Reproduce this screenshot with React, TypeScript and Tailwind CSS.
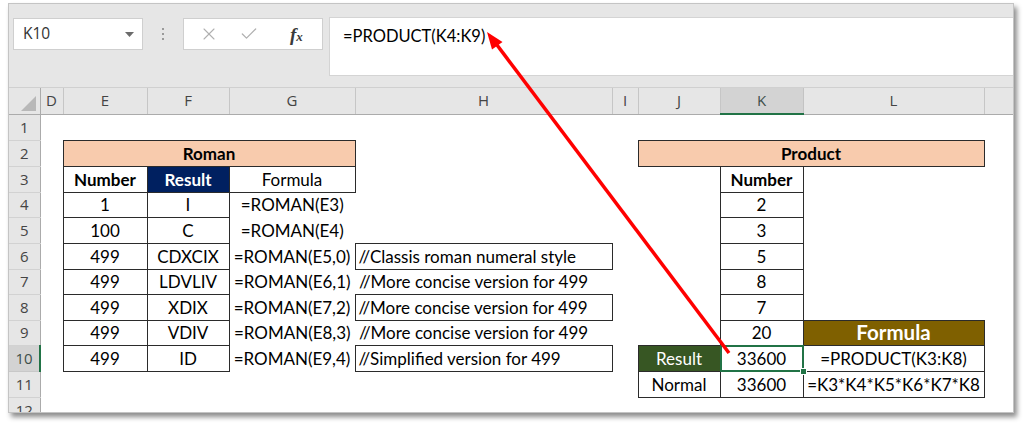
import { X, Check } from "lucide-react";

type Cell = { t?: string; cls?: string; span?: number; sel?: boolean };

const colWidths = [31, 23, 84, 82, 126, 257, 26, 82, 83, 181, 29];
const colLetters = ["D", "E", "F", "G", "H", "I", "J", "K", "L", ""];
const rowHeights = [26, 26, 26, 25, 26, 26, 25, 26, 25, 26, 26, 26];

const B = "border border-[#2b2b2b]";
const peach = `${B} bg-[#f8cbad] font-bold`;
const box = `${B} text-left pl-[3px]`;
const formulaHead = `${B} bg-[#7f6000] text-white font-bold text-[20.5px]`;

const romanRows: [string, string, string, string, boolean][] = [
  ["1", "I", "=ROMAN(E3)", "", false],
  ["100", "C", "=ROMAN(E4)", "", false],
  ["499", "CDXCIX", "=ROMAN(E5,0)", "//Classis roman numeral style", true],
  ["499", "LDVLIV", "=ROMAN(E6,1)", "//More concise version for 499", false],
  ["499", "XDIX", "=ROMAN(E7,2)", "//More concise version for 499", true],
  ["499", "VDIV", "=ROMAN(E8,3)", "//More concise version for 499", false],
  ["499", "ID", "=ROMAN(E9,4)", "//Simplified version for 499", true],
];
const productNums = ["2", "3", "5", "8", "7", "20"];

function buildRows(): Cell[][] {
  const rows: Cell[][] = [];
  rows.push(Array.from({ length: 10 }, () => ({})));
  rows.push([{}, { t: "Roman", span: 3, cls: peach }, {}, {}, { t: "Product", span: 3, cls: peach }, {}]);
  rows.push([
    {},
    { t: "Number", cls: `${B} font-bold` },
    { t: "Result", cls: `${B} font-bold bg-[#002060] text-white` },
    { t: "Formula", cls: B },
    {},
    {},
    {},
    { t: "Number", cls: `${B} font-bold` },
    {},
    {},
  ]);
  romanRows.forEach(([n, r, f, note, boxed], i) => {
    const row: Cell[] = [
      {},
      { t: n, cls: B },
      { t: r, cls: B },
      { t: f },
      { t: note, cls: boxed ? box : "text-left pl-[4px]" },
      {},
    ];
    if (i < 6) {
      row.push({});
      row.push({ t: productNums[i], cls: B });
      row.push(i === 5 ? { t: "Formula", cls: formulaHead } : {});
    } else {
      row.push({ t: "Result", cls: `${B} bg-[#375623] text-white` });
      row.push({ t: "33600", cls: B, sel: true });
      row.push({ t: "=PRODUCT(K3:K8)", cls: B });
    }
    row.push({});
    rows.push(row);
  });
  rows.push([
    {},
    {},
    {},
    {},
    {},
    {},
    { t: "Normal", cls: B },
    { t: "33600", cls: B },
    { t: "=K3*K4*K5*K6*K7*K8", cls: B },
    {},
  ]);
  rows.push(Array.from({ length: 10 }, () => ({})));
  return rows;
}

export default function App() {
  const rows = buildRows();

  return (
    <div className="relative w-[1024px] h-[429px] bg-white overflow-hidden">
      {/* Excel window */}
      <div className="ml-[8px] mt-[3px] w-[1006px] h-[410px] border border-[#c4c4c4] bg-white overflow-hidden shadow-[3px_4px_5px_rgba(0,0,0,0.45)]">
        {/* Formula bar area */}
        <div className="h-[84px] bg-[#e6e6e6] flex items-start pl-[4px] pt-[13px] border-b border-[#d0d0d0]">
          <div className="mt-[1px] w-[130px] h-[32px] bg-white border border-[#cfcfcf] flex items-center justify-between pl-[9px] pr-[8px]">
            <span className="font-['Open_Sans',sans-serif] text-[15.5px] text-[#333]">K10</span>
            <svg width="9" height="5" viewBox="0 0 9 5">
              <path d="M0 0h9L4.5 5z" fill="#6b6b6b" />
            </svg>
          </div>
          <div className="w-[40px] h-[32px] mt-[1px] flex flex-col items-center justify-center gap-[3px]">
            <span className="w-[2px] h-[2px] bg-[#9a9a9a]" />
            <span className="w-[2px] h-[2px] bg-[#9a9a9a]" />
            <span className="w-[2px] h-[2px] bg-[#9a9a9a]" />
          </div>
          <div className="mt-[1px] w-[140px] h-[32px] bg-white border border-[#cfcfcf] flex items-center pl-[15px]">
            <X className="w-[20px] h-[20px] text-[#b0b0b0]" strokeWidth={1.3} />
            <Check className="ml-[20px] w-[20px] h-[20px] text-[#b0b0b0]" strokeWidth={1.5} />
            <span className="ml-[31px] font-['Liberation_Serif',serif] italic font-bold text-[19px] text-[#3a3a3a] leading-none">
              f<span className="text-[13px]">x</span>
            </span>
          </div>
          <div className="ml-[6px] flex-1 h-[59px] bg-white border border-r-0 border-[#d4d4d4] pl-[13px] pt-[6px]">
            <span className="font-['Lato',sans-serif] text-[16.5px] text-black">=PRODUCT(K4:K9)</span>
          </div>
        </div>

        {/* Grid */}
        <table className="table-fixed border-collapse w-[1004px] font-['Lato',sans-serif] text-[17px] text-black leading-none">
          <colgroup>
            {colWidths.map((w, i) => (
              <col key={i} style={{ width: w }} />
            ))}
          </colgroup>
          <tbody>
            <tr className="h-[26px]">
              <td className="bg-[#e6e6e6] border-r border-b border-[#ababab] p-0 align-bottom">
                <svg width="31" height="25" viewBox="0 0 31 25" className="block">
                  <path d="M12 22h15V7z" fill="#b8b8b8" />
                </svg>
              </td>
              {colLetters.map((l, i) => (
                <td
                  key={i}
                  className={
                    l === "K"
                      ? "bg-[#d3d3d3] border-r border-r-[#c3c3c3] border-b-2 border-b-[#217346] text-center font-['Open_Sans',sans-serif] text-[15px] text-[#3d4f4a]"
                      : "bg-[#e6e6e6] border-r border-r-[#c6c6c6] border-b border-b-[#ababab] text-center font-['Open_Sans',sans-serif] text-[15px] text-[#444]"
                  }
                >
                  {l}
                </td>
              ))}
            </tr>
            {rows.map((row, r) => (
              <tr key={r} style={{ height: rowHeights[r] }}>
                <td
                  className={
                    r === 9
                      ? "bg-[#d3d3d3] border-r-2 border-r-[#217346] border-b border-b-[#c8c8c8] text-center font-['Open_Sans',sans-serif] text-[15px] text-[#3d4f4a]"
                      : "bg-[#e6e6e6] border-r border-r-[#ababab] border-b border-b-[#d2d2d2] text-center font-['Open_Sans',sans-serif] text-[15px] text-[#444]"
                  }
                >
                  {r + 1}
                </td>
                {row.map((c, i) => (
                  <td
                    key={i}
                    colSpan={c.span}
                    className={`relative p-0 whitespace-nowrap overflow-visible text-center align-middle ${c.cls ?? ""}`}
                  >
                    {c.t}
                    {c.sel && (
                      <>
                        <div className="absolute -inset-[1px] border-2 border-[#217346]" />
                        <div className="absolute -right-[4px] -bottom-[4px] w-[7px] h-[7px] bg-[#217346] border border-white" />
                      </>
                    )}
                  </td>
                ))}
              </tr>
            ))}
          </tbody>
        </table>
      </div>

      {/* Red arrow */}
      <svg className="absolute left-0 top-0 pointer-events-none" width="1024" height="429" viewBox="0 0 1024 429">
        <line x1="729" y1="353" x2="497" y2="45" stroke="#ff0000" strokeWidth="3.5" />
        <polygon points="487,32 502.5,42 492,49.5" fill="#ff0000" />
      </svg>
    </div>
  );
}
